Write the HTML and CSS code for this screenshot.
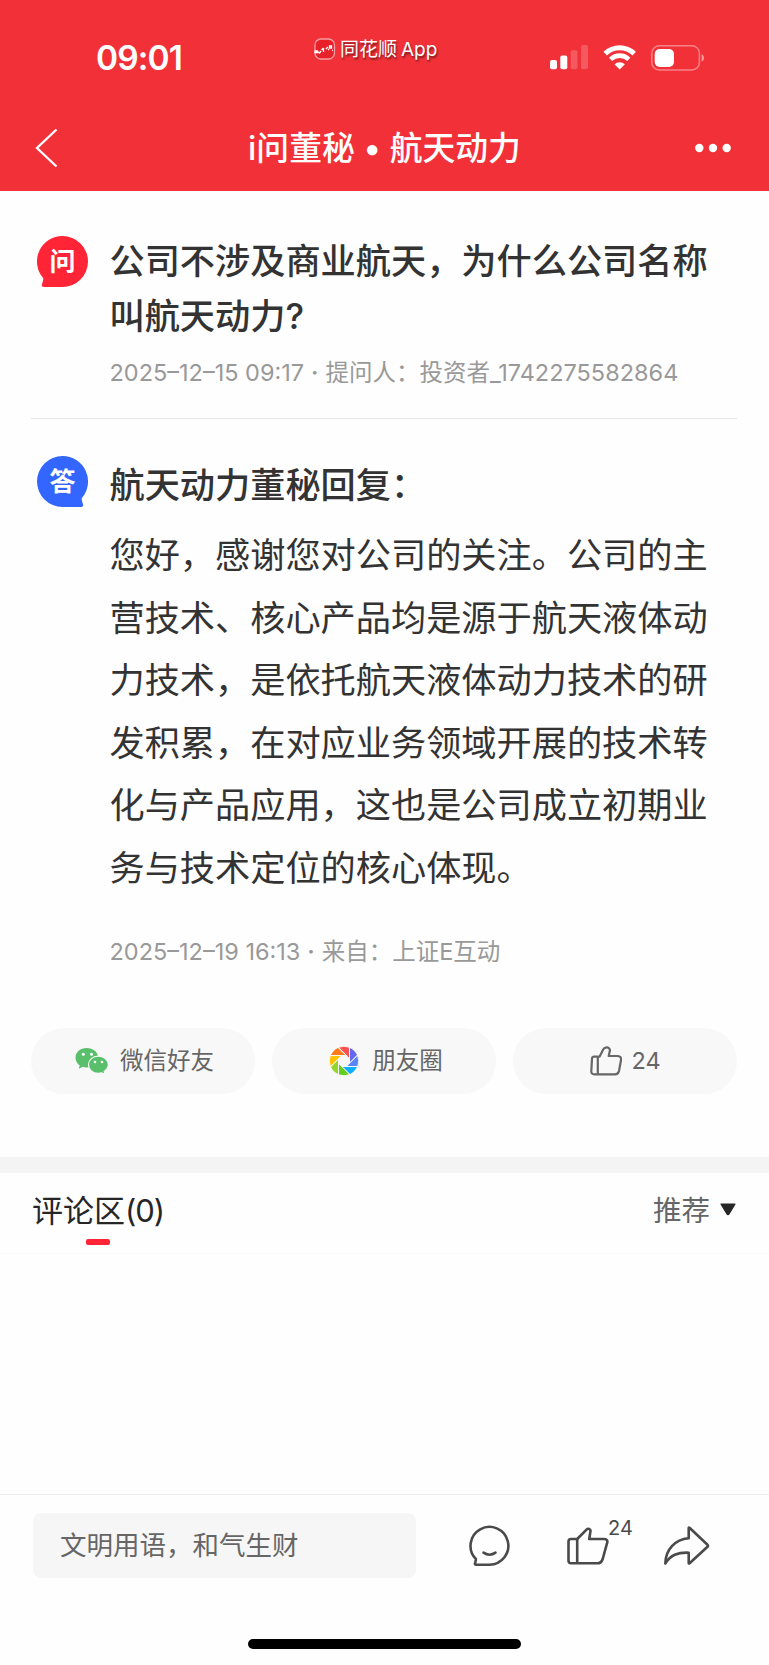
FILE: index.html
```html
<!DOCTYPE html>
<html lang="zh-CN">
<head>
    <meta charset="UTF-8">
    <meta name="viewport" content="width=device-width, initial-scale=1.0">
    <title>i问董秘 • 航天动力</title>
    <link rel="stylesheet" href="styles.css">
</head>
<body>
    <header class="header">
        <div class="status-bar">
            <span class="time">09:01</span>
            <div class="brand">
                <svg class="brand-icon" width="22" height="22" viewBox="0 0 22 22">
                    <rect x="1" y="1" width="19.5" height="20" rx="6" fill="#e8202a" stroke="#fff" stroke-opacity=".55" stroke-width="1.3"/>
                    <path d="M1 13h2.5v1.5H1zM4 14l1.5 1 1.5-2M7.5 12l2-2M9.5 10v4M12 11l1.8-2M14 12l1-1M15.5 8h2v2h-2zM18 12l1 .5" fill="none" stroke="#fff" stroke-width="1.3"/>
                </svg>
                <span class="brand-name">同花顺<span class="brand-app">App</span></span>
            </div>
            <div class="status-icons">
                <svg width="39" height="25" viewBox="0 0 39 25" fill="#fff">
                    <rect x="0" y="15" width="7" height="9.3" rx="2"/>
                    <rect x="10.3" y="10.5" width="7" height="13.8" rx="2"/>
                    <rect x="20.7" y="5.3" width="6.8" height="19" rx="2" opacity=".2"/>
                    <rect x="31" y="0" width="7" height="24.3" rx="2" opacity=".2"/>
                </svg>
                <svg width="34" height="25" viewBox="0 0 34 25" fill="none" stroke="#fff">
                    <path d="M2.2 8.6a21 21 0 0 1 29 0" stroke-width="5"/>
                    <path d="M7.6 14.3a13.2 13.2 0 0 1 18.2 0" stroke-width="4.6"/>
                    <path d="M11.5 19.3a7.5 7.5 0 0 1 10.4 0L16.7 24.5z" fill="#fff" stroke="none"/>
                </svg>
                <svg width="54" height="26" viewBox="0 0 54 26">
                    <rect x=".8" y=".8" width="47.6" height="24.2" rx="7.5" fill="none" stroke="#fff" stroke-opacity=".4" stroke-width="1.5"/>
                    <rect x="3.7" y="4" width="19.3" height="18" rx="5" fill="#fff"/>
                    <path d="M50.6 9.3c3.2 1 3.2 6.3 0 7.3z" fill="#fff" opacity=".5"/>
                </svg>
            </div>
        </div>
        <nav class="nav-bar">
            <svg width="24" height="40" viewBox="0 0 24 40" fill="none" stroke="#fff" stroke-width="2.3">
                <path d="M21.5 1.5L2 20l19.5 18.5"/>
            </svg>
            <h1 class="nav-title">i问董秘 • 航天动力</h1>
            <svg width="36" height="10" viewBox="0 0 36 10" fill="#fff">
                <circle cx="4.3" cy="5" r="4.2"/>
                <circle cx="18" cy="5" r="4.2"/>
                <circle cx="31.7" cy="5" r="4.2"/>
            </svg>
        </nav>
    </header>

    <main class="content">
        <section class="question">
            <div class="badge">
                <svg class="badge-shape" width="51" height="51" viewBox="0 0 51 51">
                    <path d="M25.5 0a25.5 25.5 0 0 1 0 51H7c-1.8 0-2.5-1-2.1-2.5C5.3 47 6.6 43.5 6.3 42.3A25.5 25.5 0 0 1 25.5 0z" fill="#ff2436"/>
                </svg>
                <span class="badge-text">问</span>
            </div>
            <div class="qa-body">
                <h2 class="question-title">公司不涉及商业航天，为什么公司名称叫航天动力?</h2>
                <p class="meta">2025–12–15 09:17<span class="dot"> · </span>提问人：投资者_1742275582864</p>
            </div>
        </section>

        <section class="answer">
            <div class="badge">
                <svg class="badge-shape" width="51" height="51" viewBox="0 0 51 51">
                    <path d="M25.5 0a25.5 25.5 0 0 0 0 51H44c1.8 0 2.5-1 2.1-2.5C45.7 47 44.4 43.5 44.7 42.3A25.5 25.5 0 0 0 25.5 0z" fill="#3366ff"/>
                </svg>
                <span class="badge-text">答</span>
            </div>
            <div class="qa-body">
                <h2 class="answer-title">航天动力董秘回复：</h2>
                <p class="answer-text">您好，感谢您对公司的关注。公司的主营技术、核心产品均是源于航天液体动力技术，是依托航天液体动力技术的研发积累，在对应业务领域开展的技术转化与产品应用，这也是公司成立初期业务与技术定位的核心体现。</p>
                <p class="meta">2025–12–19 16:13<span class="dot"> · </span>来自：上证E互动</p>
            </div>
        </section>

        <div class="share-row">
            <button class="share-btn wechat">
                <svg width="34" height="28" viewBox="0 0 34 28">
                    <path d="M11.7 1C5.3 1 .5 5.2.5 10.7c0 3.2 1.7 5.9 4.2 7.7L3.8 21.8l4-2c1.3.4 2.6.6 3.9.6 6.4 0 11.5-4.3 11.5-9.7S18.1 1 11.7 1z" fill="#59bf6b"/>
                    <path d="M23.2 9.2c-5.5 0-9.7 3.7-9.7 8.6s4.2 8.6 9.7 8.6c1.3 0 2.5-.2 3.5-.5l3.3 1.5-.8-3c2.4-1.6 4.1-3.9 4.1-6.6 0-4.900-4.700-8.600-10.100-8.600z" fill="#59bf6b" stroke="#f8f8f8" stroke-width="1.2"/>
                    <g fill="#fff">
                        <circle cx="8.3" cy="7.3" r="1.5"/>
                        <circle cx="16.5" cy="7.3" r="1.5"/>
                        <circle cx="20" cy="15" r="1.3"/>
                        <circle cx="27" cy="15" r="1.3"/>
                    </g>
                </svg>
                <span>微信好友</span>
            </button>
            <button class="share-btn moments">
                <!-- eight identical blades, one every 45 degrees -->
                <svg width="30" height="30" viewBox="-15.3 -15.3 30.6 30.6">
                    <g stroke="#f8f8f8" stroke-width="1">
                        <path d="M-5.94-13.86A15.1 15.1 0 0 1 5.6-14V-2.32z" fill="#fa5151"/>
                        <path d="M-5.94-13.86A15.1 15.1 0 0 1 5.6-14V-2.32z" transform="rotate(45)" fill="#6467f0"/>
                        <path d="M-5.94-13.86A15.1 15.1 0 0 1 5.6-14V-2.32z" transform="rotate(90)" fill="#5a85f5"/>
                        <path d="M-5.94-13.86A15.1 15.1 0 0 1 5.6-14V-2.32z" transform="rotate(135)" fill="#10aeff"/>
                        <path d="M-5.94-13.86A15.1 15.1 0 0 1 5.6-14V-2.32z" transform="rotate(180)" fill="#63cd20"/>
                        <path d="M-5.94-13.86A15.1 15.1 0 0 1 5.6-14V-2.32z" transform="rotate(225)" fill="#95d42d"/>
                        <path d="M-5.94-13.86A15.1 15.1 0 0 1 5.6-14V-2.32z" transform="rotate(270)" fill="#ffc300"/>
                        <path d="M-5.94-13.86A15.1 15.1 0 0 1 5.6-14V-2.32z" transform="rotate(315)" fill="#ff7a1a"/>
                    </g>
                </svg>
                <span>朋友圈</span>
            </button>
            <button class="share-btn like">
                <svg width="32" height="30" viewBox="0 0 32 30" fill="none" stroke="#666" stroke-width="2.2" stroke-linejoin="round">
                    <path d="M4 10.7H9.5L13.2 3.5C14.2 1.5 15.5 1.2 17 1.3c2 .2 3.3 1.9 2.8 4L18.7 10H27c3 0 4.5 1.5 4 4L29 25c-.5 2.3-1.8 3.3-4 3.3H4.5c-2.3 0-3.3-1.2-3.2-3L2 12.7c.1-1.3.8-2 2-2z"/>
                    <path d="M7.8 11v17"/>
                </svg>
                <span>24</span>
            </button>
        </div>
    </main>

    <section class="comments">
        <div class="comments-head">
            <h3 class="comments-tab">评论区<span class="comments-count">(0)</span></h3>
            <div class="sort">
                <span>推荐</span>
                <svg class="sort-arrow" width="16" height="13" viewBox="0 0 16 13" fill="#262626" stroke="#262626" stroke-linejoin="round" stroke-width="1.5">
                    <path d="M1.2 1.2h13.6L8.9 10.9q-.9 1-1.8 0z"/>
                </svg>
            </div>
        </div>
    </section>

    <footer class="footer">
        <div class="toolbar">
            <div class="comment-input">文明用语，和气生财</div>
            <svg class="icon-comment" width="41" height="42" viewBox="0 0 41 42" fill="none" stroke="#4a4a4a" stroke-width="2.6" stroke-linejoin="round" stroke-linecap="round">
                <path d="M20.5 39.7a18.9 18.9 0 1 0-13.7-5.8c.4.5-.1 1.8-.7 4-.4 1.3 0 1.8 1 1.8z"/>
                <path d="M14.5 27.7q6 4 12 0"/>
            </svg>
            <div class="icon-like">
                <svg width="42" height="40" viewBox="0 0 42 40" fill="none" stroke="#4a4a4a" stroke-width="2.6" stroke-linejoin="round">
                    <path d="M4 13h6.2L19.8 3.3c1.2-1.2 4-.4 3.7 1.8L22.2 13H37c2.7 0 3.8 1.5 3.2 3.7L35.7 33c-1 3.2-2.2 4.3-5.5 4.3H4c-1.7 0-2.5-.8-2.5-2.5V15.5C1.5 13.8 2.3 13 4 13z"/>
                    <path d="M10.2 13v24"/>
                </svg>
                <span class="like-count">24</span>
            </div>
            <svg class="icon-share" width="46" height="40" viewBox="0 0 46 40" fill="none" stroke="#4a4a4a" stroke-width="2.6" stroke-linejoin="round">
                <path d="M25.5 1.8q-.8-.6-.8.6V12.3C11 13.5 1.5 23.5 1.3 37.5 6.5 29 13.5 26.3 24.7 26.7v10.1q0 1.2.9.5L43.5 20.8q1-1 0-2z"/>
            </svg>
        </div>
        <div class="home-indicator"></div>
    </footer>
</body>
</html>
```
FILE: styles.css
```css
* {
    box-sizing: border-box;
}

body {
    margin: 0;
    height: 1665px;
    display: flex;
    flex-direction: column;
    font-family: Inter, "Noto Sans CJK SC", sans-serif;
    background-color: #fefefe;
    color: #333;
}

h1, h2, h3, p {
    margin: 0;
}

svg {
    display: block;
    flex-shrink: 0;
}

/* Header */
.header {
    height: 191px;
    background: #f23038;
    color: #fff;
}

.status-bar {
    height: 108px;
    padding: 0 64px 0 96px;
    display: flex;
    align-items: flex-start;
}

.time {
    margin-top: 38px;
    width: 218px;
    font-size: 33.5px;
    line-height: 41px;
    font-weight: 600;
    letter-spacing: -0.9px;
}

.brand {
    margin-top: 36px;
    display: flex;
    align-items: center;
    gap: 4px;
}

.brand-icon {
    margin-top: -2px;
}

.brand-name {
    font-size: 19px;
    line-height: 28px;
    text-shadow: 1px 2px 2px rgba(0, 0, 0, 0.5);
}

.brand-app {
    margin-left: 4px;
}

.status-icons {
    margin-top: 45px;
    margin-left: auto;
    display: flex;
    gap: 14px;
}

.nav-bar {
    height: 79px;
    padding: 0 38px 0 35px;
    display: flex;
    align-items: center;
}

.nav-title {
    flex: 1;
    padding-left: 15px;
    font-size: 32.8px;
    line-height: 48px;
    font-weight: 500;
    text-align: center;
}

/* Question and answer */
.content {
    height: 966px;
    padding: 0 32px 0 31px;
}

.question {
    height: 228px;
    padding: 43px 0 0 6px;
    display: flex;
    border-bottom: 1px solid #e8e8e8;
}

.answer {
    padding: 39px 0 0 6px;
    display: flex;
}

.badge {
    position: relative;
    width: 51px;
    height: 51px;
    margin-top: 2px;
    margin-right: 21.5px;
    flex-shrink: 0;
}

.answer .badge {
    margin-top: -2px;
}

.badge-shape {
    position: absolute;
}

.badge-text {
    position: relative;
    display: block;
    color: #fff;
    font-size: 26px;
    line-height: 51px;
    font-weight: 700;
    text-align: center;
}

.qa-body {
    width: 602px;
}

.question-title,
.answer-title {
    font-size: 35.2px;
    line-height: 55px;
    font-weight: 500;
}

.meta {
    font-size: 23.5px;
    line-height: 34px;
    color: #999;
}

.dot {
    margin: 0 1px;
    font-weight: 600;
}

.question .meta {
    margin-top: 12px;
}

.answer-text {
    margin-top: 11px;
    font-size: 35.2px;
    line-height: 62.5px;
}

.answer .meta {
    margin-top: 36px;
}

.share-row {
    margin-top: 59px;
    display: grid;
    grid-template-columns: repeat(3, 1fr);
    gap: 17px;
}

.share-btn {
    height: 66px;
    padding: 0;
    border: none;
    border-radius: 33px;
    background: #f8f8f8;
    display: flex;
    align-items: center;
    justify-content: center;
    font-family: inherit;
    font-size: 23.5px;
    line-height: 34px;
    color: #666;
    gap: 11px;
}

.share-btn.wechat {
    padding-left: 3px;
}

.share-btn.moments {
    padding-left: 4px;
    gap: 13px;
}

.share-btn.like {
    padding-left: 1px;
    gap: 9px;
}

/* Comments */
.comments {
    flex: 1;
    border-top: 16px solid #f4f4f4;
}

.comments-head {
    height: 81px;
    padding: 0 33px 0 32px;
    display: flex;
    justify-content: space-between;
    border-bottom: 1px solid #f9f9f9;
}

.comments-tab {
    position: relative;
    font-size: 31px;
    line-height: 76px;
    font-weight: 400;
    color: #262626;
}

.comments-count {
    letter-spacing: -1px;
}

.comments-tab::after {
    content: "";
    position: absolute;
    left: 54px;
    bottom: 8px;
    width: 24px;
    height: 6px;
    border-radius: 2px;
    background: #ff2436;
}

.sort {
    height: 71px;
    display: flex;
    align-items: center;
    gap: 10px;
    font-size: 28.5px;
    color: #666;
}

.sort-arrow {
    margin-top: 2px;
}

/* Bottom bar */
.footer {
    height: 171px;
    border-top: 1px solid #eee;
}

.toolbar {
    padding: 18px 58px 0 33px;
    display: flex;
    align-items: center;
}

.comment-input {
    flex-shrink: 0;
    width: 383px;
    height: 65px;
    margin-right: 53px;
    padding-left: 27px;
    border-radius: 8px;
    background: #f6f6f6;
    font-size: 26.5px;
    line-height: 65px;
    color: #666;
}

.icon-like {
    position: relative;
    margin-left: 57px;
}

.like-count {
    position: absolute;
    left: 41px;
    top: -10px;
    font-size: 20px;
    line-height: 24px;
    color: #4a4a4a;
}

.icon-share {
    margin-left: 55px;
}

.home-indicator {
    width: 273px;
    height: 10px;
    margin: 61px auto 0;
    border-radius: 5px;
    background: #000;
}
```
